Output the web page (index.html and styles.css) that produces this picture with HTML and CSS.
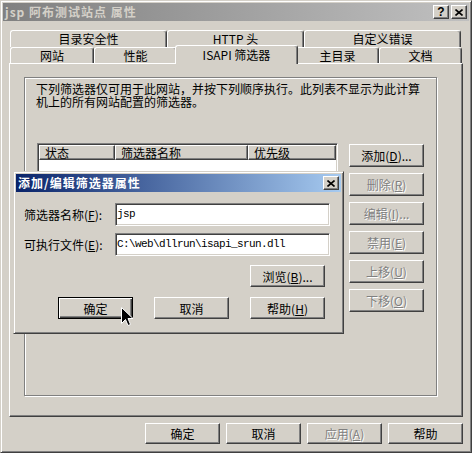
FILE: index.html
```html
<!DOCTYPE html>
<html lang="zh-CN">
<head>
    <meta charset="utf-8">
    <title>jsp 阿布测试站点 属性</title>
    <link rel="stylesheet" href="styles.css">
</head>
<body>
    <div class="window">
        <div class="titlebar">
            <span class="title">jsp 阿布测试站点 属性</span>
            <span class="capbtn help">?</span>
            <span class="capbtn">
                <svg width="8" height="7" viewBox="0 0 8 7"><path d="M0.5 0.5 L7.5 6.5 M7.5 0.5 L0.5 6.5" stroke="#000" stroke-width="1.6" fill="none"/></svg>
            </span>
        </div>

        <div class="client">
            <div class="tabs">
                <div class="tabrow back">
                    <div class="tab tab-wide">目录安全性</div>
                    <div class="tab tab-http">HTTP 头</div>
                    <div class="tab tab-wide">自定义错误</div>
                </div>
                <div class="tabrow front">
                    <div class="tab tab-site">网站</div>
                    <div class="tab tab-std">性能</div>
                    <div class="tab tab-isapi selected">ISAPI 筛选器</div>
                    <div class="tab tab-std">主目录</div>
                    <div class="tab tab-std">文档</div>
                </div>
            </div>

            <div class="sheet">
                <div class="group">
                    <p class="intro">下列筛选器仅可用于此网站，并按下列顺序执行。此列表不显示为此计算<br>机上的所有网站配置的筛选器。</p>
                    <div class="filters">
                        <div class="listview">
                            <div class="listhead">
                                <div class="col col-state">状态</div>
                                <div class="col col-name">筛选器名称</div>
                                <div class="col col-prio">优先级</div>
                            </div>
                        </div>
                        <div class="sidebtns">
                            <div class="btn">添加(<u>D</u>)...</div>
                            <div class="btn disabled">删除(<u>R</u>)</div>
                            <div class="btn disabled">编辑(<u>I</u>)...</div>
                            <div class="btn disabled">禁用(<u>E</u>)</div>
                            <div class="btn disabled">上移(<u>U</u>)</div>
                            <div class="btn disabled">下移(<u>O</u>)</div>
                        </div>
                    </div>
                </div>
            </div>

            <div class="footer">
                <div class="btn">确定</div>
                <div class="btn">取消</div>
                <div class="btn disabled">应用(<u>A</u>)</div>
                <div class="btn">帮助</div>
            </div>
        </div>

        <!-- modal over the property sheet -->
        <div class="dialog">
            <div class="titlebar active">
                <span class="title">添加/编辑筛选器属性</span>
                <span class="capbtn">
                    <svg width="8" height="7" viewBox="0 0 8 7"><path d="M0.5 0.5 L7.5 6.5 M7.5 0.5 L0.5 6.5" stroke="#000" stroke-width="1.6" fill="none"/></svg>
                </span>
            </div>
            <div class="dlgbody">
                <div class="form">
                    <label>筛选器名称(<u>F</u>):</label>
                    <div class="edit">jsp</div>
                    <label>可执行文件(<u>E</u>):</label>
                    <div class="edit">C:\web\dllrun\isapi_srun.dll</div>
                </div>
                <div class="dlgbtns first">
                    <div class="btn">浏览(<u>B</u>)...</div>
                </div>
                <div class="dlgbtns">
                    <div class="btn default">确定</div>
                    <div class="btn">取消</div>
                    <div class="btn">帮助(<u>H</u>)</div>
                </div>
            </div>
        </div>

        <svg class="cursor" width="13" height="20" viewBox="0 0 13 20">
            <path d="M0.5 0.5 L0.5 16.5 L4.5 12.5 L7 18.5 L9.5 17.5 L7 11.5 L12 11.5 Z" fill="#000" stroke="#fff" stroke-width="1"/>
        </svg>
    </div>
</body>
</html>
```

FILE: styles.css
```css
* {
    box-sizing: border-box;
}

body {
    margin: 0;
    font-family: "Noto Sans CJK SC", sans-serif;
    font-size: 12px;
    color: #000;
    background: #d4d0c8;
}

u {
    text-decoration: underline;
}

.window {
    position: relative;
    width: 472px;
    height: 453px;
    padding: 2px;
    background: #d4d0c8;
    border: 1px solid;
    border-color: #d4d0c8 #404040 #404040 #d4d0c8;
    box-shadow: inset 1px 1px #fff, inset -1px -1px #808080;
}

/* caption bars */
.titlebar {
    display: flex;
    align-items: center;
    height: 18px;
    padding: 0 2px 0 2px;
    background: linear-gradient(to right, #808080, #c0c0c0);
}

.titlebar .title {
    flex: 1;
    font-weight: bold;
    letter-spacing: 1px;
    color: #d4d0c8;
    line-height: 18px;
    white-space: nowrap;
}

.titlebar.active {
    background: linear-gradient(to right, #0a246a, #a6caf0);
}

.titlebar.active .title {
    color: #fff;
}

.capbtn {
    display: flex;
    align-items: center;
    justify-content: center;
    width: 16px;
    height: 14px;
    background: #d4d0c8;
    border: 1px solid;
    border-color: #fff #404040 #404040 #fff;
    box-shadow: inset -1px -1px #808080;
}

.capbtn + .capbtn {
    margin-left: 2px;
}

.capbtn.help {
    font-family: "Liberation Sans", sans-serif;
    font-weight: bold;
    font-size: 12px;
    line-height: 12px;
}

.client {
    padding: 9px 0 0 6px;
}

/* tabs */
.tabs {
    margin-left: 1px;
}

.tabrow {
    display: flex;
}

.tabrow.back {
    height: 17px;
}

.tabrow.front {
    height: 16px;
}

.tab {
    flex: none;
    height: 100%;
    border: 1px solid #fff;
    border-right-color: #404040;
    border-bottom: 0;
    border-radius: 3px 3px 0 0;
    box-shadow: inset -1px 0 #808080;
    background: #d4d0c8;
    text-align: center;
    line-height: 15px;
    white-space: nowrap;
}

.tab-wide { width: 157px; }
.tab-http { width: 137px; }
.tab-site { width: 84px; }
.tab-std { width: 83px; }
.tab-isapi { width: 119px; }

.tab.selected {
    position: relative;
    z-index: 2;
    width: 123px;
    height: 19px;
    margin: -2px -2px 0;
    line-height: 17px;
}

/* property page */
.sheet {
    width: 454px;
    height: 354px;
    padding: 13px 0 0 14px;
    border: 1px solid;
    border-color: #fff #404040 #404040 #fff;
    box-shadow: inset -1px -1px #808080;
}

.group {
    width: 413px;
    height: 319px;
    padding: 4px 0 0 11px;
    border: 1px solid #808080;
    box-shadow: inset 1px 1px #fff, 1px 1px #fff;
}

.intro {
    margin: 0;
    line-height: 13px;
    white-space: nowrap;
}

.filters {
    display: flex;
    gap: 11px;
    margin-top: 35px;
    margin-left: 1px;
}

.listview {
    width: 301px;
    height: 150px;
    padding: 1px;
    background: #fff;
    border: 1px solid;
    border-color: #808080 #fff #fff #808080;
    box-shadow: inset 1px 1px #404040, inset -1px -1px #d4d0c8;
}

.listhead {
    display: flex;
    height: 15px;
}

.col {
    flex: none;
    padding-left: 5px;
    line-height: 13px;
    background: #d4d0c8;
    border: 1px solid;
    border-color: #fff #404040 #404040 #fff;
    box-shadow: inset -1px -1px #808080;
}

.col-state { width: 76px; }
.col-name { width: 133px; }
.col-prio { width: 88px; }

.sidebtns {
    display: flex;
    flex-direction: column;
    gap: 6px;
    margin-top: 1px;
}

.sidebtns .btn {
    height: 23px;
}

/* push buttons */
.btn {
    display: flex;
    align-items: center;
    justify-content: center;
    flex: none;
    width: 75px;
    height: 22px;
    background: #d4d0c8;
    border: 1px solid;
    border-color: #fff #404040 #404040 #fff;
    box-shadow: inset -1px -1px #808080;
    white-space: nowrap;
}

.btn.disabled {
    color: #808080;
    text-shadow: 1px 1px 0 #fff;
}

.btn.default {
    border-color: #000;
    box-shadow: inset 1px 1px #fff, inset -1px -1px #404040, inset -2px -2px #808080;
}

.footer {
    display: flex;
    justify-content: flex-end;
    gap: 6px;
    width: 454px;
    margin-top: 6px;
}

.footer .btn {
    height: 21px;
}

/* add/edit filter dialog */
.dialog {
    position: absolute;
    left: 12px;
    top: 170px;
    z-index: 5;
    width: 331px;
    height: 163px;
    padding: 2px;
    background: #d4d0c8;
    border: 1px solid;
    border-color: #d4d0c8 #404040 #404040 #d4d0c8;
    box-shadow: inset 1px 1px #fff, inset -1px -1px #808080;
}

.dlgbody {
    padding: 11px 16px 0 8px;
}

.form {
    display: grid;
    grid-template-columns: 91px 215px;
    grid-template-rows: 23px 23px;
    row-gap: 7px;
    align-items: center;
}

.form label {
    white-space: nowrap;
}

.edit {
    height: 23px;
    padding-left: 1px;
    background: #fff;
    border: 1px solid;
    border-color: #808080 #fff #fff #808080;
    box-shadow: inset 1px 1px #404040, inset -1px -1px #d4d0c8;
    font-family: "Liberation Mono", monospace;
    font-size: 11px;
    letter-spacing: -0.6px;
    line-height: 21px;
    white-space: nowrap;
}

.dlgbtns {
    display: flex;
    justify-content: flex-end;
    gap: 21px;
    margin-top: 10px;
}

.dlgbtns.first {
    margin-top: 9px;
}

.cursor {
    position: absolute;
    left: 120px;
    top: 306px;
    z-index: 9;
}
```
